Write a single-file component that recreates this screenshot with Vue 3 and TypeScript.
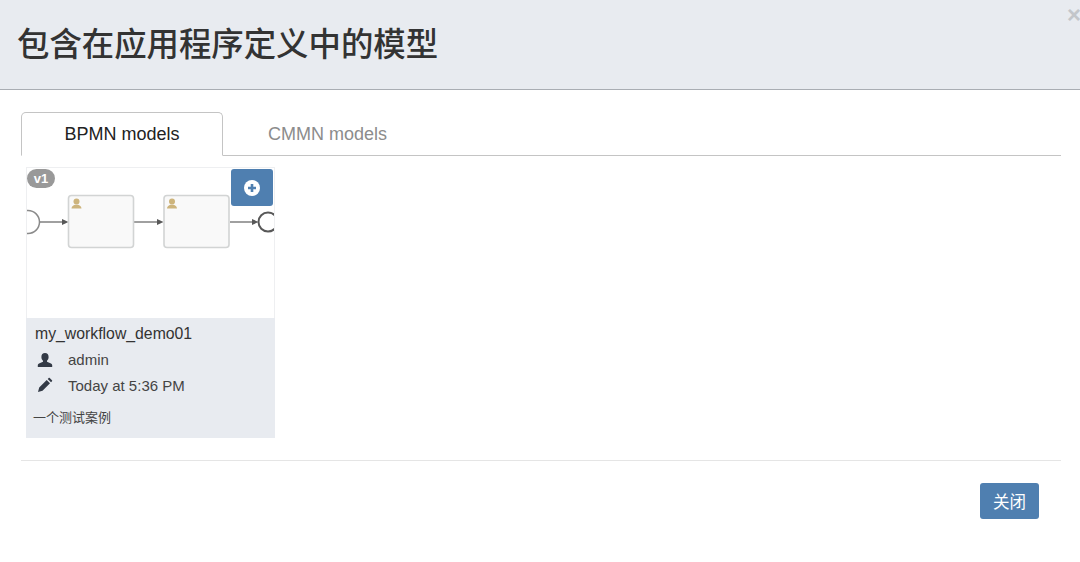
<script setup lang="ts">
interface ModelCard {
  name: string;
  version: string;
  author: string;
  updated: string;
  description: string;
}

const tabs = ['BPMN models', 'CMMN models'];

const model: ModelCard = {
  name: 'my_workflow_demo01',
  version: 'v1',
  author: 'admin',
  updated: 'Today at 5:36 PM',
  description: '一个测试案例',
};

// task boxes in the thumbnail, in thumbnail coordinates
const taskX = [41.5, 137];
</script>

<template>
  <div class="modal">
    <header class="modal-header">
      <button class="close">×</button>
      <h2>包含在应用程序定义中的模型</h2>
    </header>

    <div class="modal-body">
      <ul class="tabs">
        <li
          v-for="(tab, i) in tabs"
          :key="tab"
          :class="{ active: i === 0 }"
        >
          {{ tab }}
        </li>
      </ul>

      <div class="card">
        <div class="thumb">
          <svg class="diagram" width="248" height="150" viewBox="0 0 248 150">
            <circle cx="1" cy="54" r="11.5" fill="#fff" stroke="#8a8a8a" stroke-width="1.5" />
            <circle cx="241" cy="54" r="9.5" fill="#fff" stroke="#585858" stroke-width="2" />
            <g stroke="#808080" stroke-width="1.5" fill="#585858">
              <line x1="13" y1="54" x2="37" y2="54" />
              <line x1="107" y1="54" x2="132" y2="54" />
              <line x1="203" y1="54" x2="227" y2="54" />
            </g>
            <g fill="#585858">
              <path d="M35 51l6.5 3-6.5 3z" />
              <path d="M130 51l6.5 3-6.5 3z" />
              <path d="M225 51l6.5 3-6.5 3z" />
            </g>
            <g v-for="x in taskX" :key="x">
              <rect
                :x="x"
                y="27.5"
                width="65"
                height="52"
                rx="3"
                fill="#f9f9f9"
                stroke="#d2d4d4"
                stroke-width="1.6"
              />
              <g :transform="`translate(${x + 3} 30)`" fill="#cdb47c">
                <circle cx="5" cy="3.5" r="3" />
                <path d="M0 10.5c0-2.4 2-3 3.4-3.8h3.2c1.4.8 3.4 1.400 3.4 3.8z" />
              </g>
            </g>
          </svg>
          <span class="version">{{ model.version }}</span>
          <button class="add" aria-label="Add">
            <svg width="16" height="16" viewBox="0 0 16 16">
              <circle cx="8" cy="8" r="8" fill="#fff" />
              <path d="M8 4v8M4 8h8" stroke="#4f7fb0" stroke-width="2.6" />
            </svg>
          </button>
        </div>
        <div class="details">
          <h3>{{ model.name }}</h3>
          <div class="meta">
            <svg width="16" height="16" viewBox="0 0 16 16" fill="#333a46">
              <path d="M8 1c2.3 0 3.6 1.7 3.6 3.9 0 1.6-.7 3-1.6 3.8v1.1l4 1.6c.8.3 1.2.9 1.2 1.7V15H.8v-1.9c0-.8.4-1.4 1.2-1.7l4-1.6V8.7C5.1 7.9 4.4 6.5 4.4 4.9 4.4 2.7 5.7 1 8 1z" />
            </svg>
            <span>{{ model.author }}</span>
          </div>
          <div class="meta">
            <svg width="16" height="16" viewBox="0 0 16 16" fill="#333a46">
              <path d="M1 15l1.2-4.5 7.5-7.5 3.3 3.3-7.5 7.5zM10.700 2l1-1c.3-.3.7-.3 1 0l2.3 2.3c.3.3.3.7 0 1l-1 1z" />
            </svg>
            <span>{{ model.updated }}</span>
          </div>
          <p>{{ model.description }}</p>
        </div>
      </div>
    </div>

    <footer class="modal-footer">
      <button class="primary">关闭</button>
    </footer>
  </div>
</template>

<style>
html,
body {
  background: #fff;
}
</style>

<style scoped>
.modal {
  width: 1080px;
  height: 562px;
  overflow: hidden;
  font-family: 'Liberation Sans', 'Noto Sans CJK SC', sans-serif;
  color: #333;
}
.modal-header {
  position: relative;
  height: 90px;
  box-sizing: border-box;
  padding: 23px 17px 0;
  background: #e8ebf0;
  border-bottom: 1px solid #a9adb3;
}
.modal-header h2 {
  margin: 0;
  font-size: 32.4px;
  line-height: 44px;
  font-weight: 500;
  color: #333;
}
.close {
  position: absolute;
  top: 3px;
  right: -1px;
  padding: 0;
  border: 0;
  background: none;
  font-family: 'Liberation Sans', sans-serif;
  font-size: 24px;
  line-height: 24px;
  font-weight: 700;
  color: #c3c6ca;
}
.modal-body {
  padding: 22px 19px 0 21px;
  height: 347px;
  box-sizing: border-box;
}
.tabs {
  display: flex;
  list-style: none;
  margin: 0;
  padding: 0;
  height: 44px;
  box-sizing: border-box;
  border-bottom: 1px solid #c4c4c4;
}
.tabs li {
  width: 202px;
  height: 44px;
  box-sizing: border-box;
  text-align: center;
  line-height: 43px;
  font-size: 18px;
  color: #8c8c8c;
  border: 1px solid #fff0;
}
.tabs li.active {
  color: #222;
  background: #fff;
  border-color: #c4c4c4;
  border-bottom-color: #fff;
  border-radius: 5px 5px 0 0;
}
.tabs li:nth-child(2) {
  width: 209px;
}
.card {
  width: 249px;
  margin: 11px 0 0 5px;
}
.thumb {
  position: relative;
  height: 151px;
  box-sizing: border-box;
  background: #fff;
  border: 1px solid #eeeff1;
  border-bottom: 0;
  overflow: hidden;
}
.diagram {
  display: block;
}
.version {
  position: absolute;
  top: 1px;
  left: 0;
  width: 28px;
  height: 19px;
  border-radius: 10px;
  background: #999;
  color: #fff;
  font-size: 13px;
  font-weight: 700;
  line-height: 19px;
  text-align: center;
}
.add {
  position: absolute;
  top: 1px;
  right: 1px;
  width: 42px;
  height: 37px;
  padding: 0;
  border: 0;
  border-radius: 3px;
  background: #4f7fb0;
  display: flex;
  align-items: center;
  justify-content: center;
}
.details {
  height: 120px;
  box-sizing: border-box;
  padding: 6px 8px 0 9px;
  background: #e8ebf0;
}
.details h3 {
  margin: 0 0 3px;
  font-size: 15.8px;
  line-height: 20px;
  font-weight: 400;
  color: #333;
}
.meta {
  display: flex;
  align-items: center;
  gap: 15px;
  height: 25.5px;
  padding-left: 2px;
  font-size: 15px;
  color: #444;
}
.details p {
  margin: 11px 0 0 -2px;
  font-size: 13px;
  line-height: 18px;
  color: #444;
}
.modal-footer {
  margin: 23px 19px 0 21px;
  padding-top: 22px;
  border-top: 1px solid #e5e5e5;
  display: flex;
  justify-content: flex-end;
  padding-right: 22px;
}
.primary {
  width: 59px;
  height: 36px;
  padding: 0;
  border: 0;
  border-radius: 3px;
  background: #4f7fb0;
  color: #fff;
  font-family: 'Liberation Sans', 'Noto Sans CJK SC', sans-serif;
  font-size: 16.5px;
}
</style>
